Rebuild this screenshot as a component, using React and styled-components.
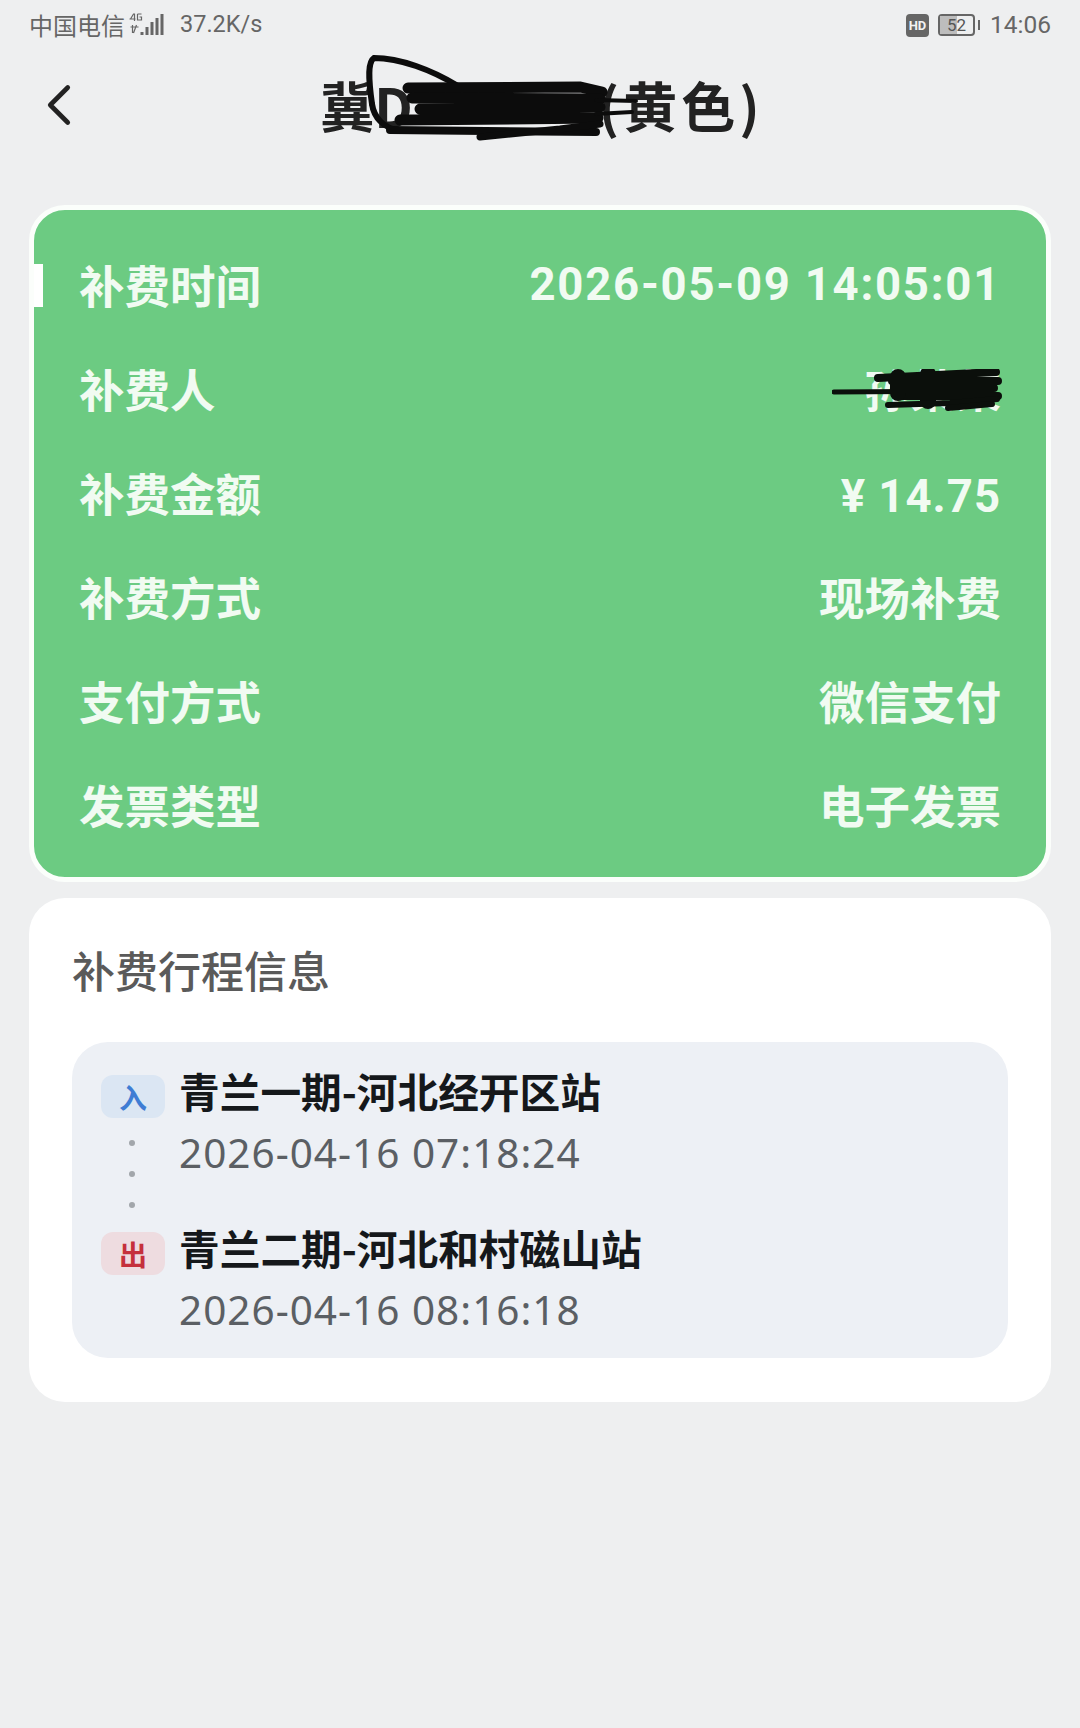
import React from 'react'
import styled, { createGlobalStyle } from 'styled-components';
import { ChevronLeft } from 'lucide-react';

const fontStack = `"Noto Sans CJK SC", "Noto Sans", sans-serif`;

const infoRows = [
  { label: '补费时间', value: '2026-05-09 14:05:01', active: true, digits: true, spacing: 1.75 },
  { label: '补费人', value: '孙某某', masked: true },
  { label: '补费金额', value: '¥ 14.75', digits: true, spacing: 1, drop: 8 },
  { label: '补费方式', value: '现场补费' },
  { label: '支付方式', value: '微信支付' },
  { label: '发票类型', value: '电子发票' },
];

const tripStops = [
  { type: 'in', tag: '入', name: '青兰一期-河北经开区站', time: '2026-04-16 07:18:24' },
  { type: 'out', tag: '出', name: '青兰二期-河北和村磁山站', time: '2026-04-16 08:16:18' },
];

const SignalIcon = () => (
  <svg width="37" height="24" viewBox="0 0 34 24" fill="#666">
    <rect x="21" y="9" width="3" height="13" />
    <rect x="26" y="5" width="3" height="17" />
    <rect x="31" y="1" width="3" height="21" />
    <rect x="16" y="14" width="3" height="8" />
    <rect x="11" y="19" width="3" height="3" />
    <path d="M1 6l3-5h1v7M0 6h6M8 1h4M8 1v6h4V4h-2M1 14h8M3 12v8M7 12l-3 8" stroke="#666" strokeWidth="1.2" fill="none" />
  </svg>
);

const TitleScribble = () => (
  <svg width="290" height="90" viewBox="0 0 290 90" fill="none" stroke="#0c0c0c" strokeLinecap="round">
    <path d="M12 52C8 24 8 10 14 6c26 0 58 12 84 28" strokeWidth="6" />
    <path d="M12 52c2 14 12 24 26 26" strokeWidth="6" />
    <path d="M48 36L220 35L242 40" strokeWidth="11" />
    <path d="M30 78L236 80" strokeWidth="8" />
    <path d="M52 46L240 47M60 57L240 55M40 68L238 66" strokeWidth="11" />
    <path d="M120 85L200 77L240 72" strokeWidth="7" />
    <path d="M236 48L276 49M236 62L272 60" strokeWidth="4" />
  </svg>
);

const NameScribble = () => (
  <svg width="175" height="50" viewBox="0 0 175 50" fill="none" stroke="#0b0f0b" strokeLinecap="round">
    <path d="M2 23L150 22" strokeWidth="5" />
    <path d="M46 9L164 3M60 12L166 12M62 20L162 19M70 27L166 27" strokeWidth="8" />
    <path d="M66 8L66 24M96 5L96 32" strokeWidth="16" />
    <path d="M56 36L118 34L165 30" strokeWidth="6" />
    <path d="M116 39L160 35" strokeWidth="6" />
  </svg>
);

const App = () => {
  return (
    <Page>
      <GlobalStyle />
      <StatusBar>
        <StatusGroup>
          <span>中国电信</span>
          <SignalIcon />
          <NetSpeed>37.2K/s</NetSpeed>
        </StatusGroup>
        <StatusGroup>
          <HdBadge>HD</HdBadge>
          <Battery>
            <BatteryFill />
            <BatteryText>52</BatteryText>
          </Battery>
          <BatteryCap />
          <ClockText>14:06</ClockText>
        </StatusGroup>
      </StatusBar>

      <NavBar>
        <BackButton>
          <ChevronLeft size={70} strokeWidth={1.6} color="#222" />
        </BackButton>
        <Title>
          冀D
          <TitleMask>
            <TitleScribble />
          </TitleMask>
          <TitleTail>(黄色)</TitleTail>
        </Title>
      </NavBar>

      <GreenCard>
        {infoRows.map(row => (
          <InfoRow key={row.label} $active={row.active}>
            <InfoLabel>{row.label}</InfoLabel>
            <InfoValue $digits={row.digits} $spacing={row.spacing} $drop={row.drop}>
              {row.value}
              {row.masked && <NameMask><NameScribble /></NameMask>}
            </InfoValue>
          </InfoRow>
        ))}
      </GreenCard>

      <TripCard>
        <TripTitle>补费行程信息</TripTitle>
        <TripBox>
          {tripStops.map((stop, index) => (
            <TripStop key={stop.type}>
              <TagColumn>
                <StopTag $type={stop.type}>{stop.tag}</StopTag>
                {index === 0 && (
                  <Dots>
                    <Dot />
                    <Dot />
                    <Dot />
                  </Dots>
                )}
              </TagColumn>
              <StopText>
                <StopName>{stop.name}</StopName>
                <StopTime>{stop.time}</StopTime>
              </StopText>
            </TripStop>
          ))}
        </TripBox>
      </TripCard>
    </Page>
  )
}

const GlobalStyle = createGlobalStyle`
  html, body {
    margin: 0;
    padding: 0;
    background: #eeeff0;
    font-family: ${fontStack};
  }

  * {
    box-sizing: border-box;
  }
`;

const Page = styled.div`
  width: 1080px;
  height: 1728px;
  padding: 0 29px;
  background: #eeeff0;
  overflow: hidden;
`;

const StatusBar = styled.div`
  display: flex;
  justify-content: space-between;
  align-items: center;
  height: 50px;
  color: #666;
  font-size: 24px;
  line-height: 1;
`;

const StatusGroup = styled.div`
  display: flex;
  align-items: center;
  gap: 3px;
`;

const NetSpeed = styled.span`
  margin-left: 12px;
  font-family: "Roboto", sans-serif;
  font-size: 23.5px;
`;

const HdBadge = styled.span`
  display: flex;
  align-items: center;
  justify-content: center;
  width: 23px;
  height: 23px;
  margin-right: 6px;
  border-radius: 4px;
  background: #666;
  color: #f2f2f2;
  font-family: "Roboto", sans-serif;
  font-size: 13px;
  font-weight: 700;
`;

const Battery = styled.span`
  position: relative;
  display: block;
  width: 37px;
  height: 22px;
  border: 2px solid #666;
  border-radius: 4px;
`;

const BatteryFill = styled.span`
  display: block;
  width: 52%;
  height: 100%;
  background: #bdbdbd;
`;

const BatteryText = styled.span`
  position: absolute;
  inset: 0;
  display: flex;
  align-items: center;
  justify-content: center;
  color: #555;
  font-family: "Roboto", sans-serif;
  font-size: 17px;
`;

const BatteryCap = styled.span`
  display: block;
  width: 2px;
  height: 10px;
  background: #666;
`;

const ClockText = styled.span`
  margin-left: 7px;
  font-family: "Roboto", sans-serif;
  font-size: 24.5px;
`;

const NavBar = styled.div`
  position: relative;
  display: flex;
  justify-content: center;
  align-items: center;
  height: 108px;
  margin-bottom: 47px;
`;

const BackButton = styled.div`
  position: absolute;
  left: -5px;
  top: 20px;
  display: flex;
`;

const Title = styled.h1`
  position: relative;
  display: flex;
  align-items: center;
  margin: 2px 0 0;
  color: #222;
  font-size: 54px;
  font-weight: 700;
  line-height: 1;
  white-space: nowrap;
`;

const TitleMask = styled.span`
  position: relative;
  z-index: 1;
  display: block;
  width: 186px;
  height: 50px;

  svg {
    position: absolute;
    left: -53px;
    top: -28px;
  }
`;

const TitleTail = styled.span`
  letter-spacing: 4px;
  margin-right: -4px;
`;

const GreenCard = styled.section`
  display: flex;
  flex-direction: column;
  width: 1022px;
  height: 677px;
  padding: 24px 0 0;
  border: 5px solid #fbfefb;
  border-radius: 36px;
  background: #6ccb82;
`;

const InfoRow = styled.div`
  position: relative;
  display: flex;
  flex: none;
  justify-content: space-between;
  align-items: center;
  height: 104px;
  padding: 0 45px 2px;
  color: #f1fbf2;

  &::before {
    content: ${({ $active }) => ($active ? '""' : 'none')};
    position: absolute;
    left: 0;
    top: 30px;
    width: 9px;
    height: 43px;
    background: #fff;
  }
`;

const InfoLabel = styled.span`
  font-size: 45.5px;
  font-weight: 700;
  line-height: 1;
`;

const InfoValue = styled.span`
  position: relative;
  padding-top: ${({ $drop }) => $drop || 0}px;
  font-family: ${({ $digits }) => ($digits ? `"Roboto", ${fontStack}` : fontStack)};
  font-size: 45.5px;
  font-weight: 700;
  line-height: 1;
  letter-spacing: ${({ $spacing }) => $spacing || 0}px;
`;

const NameMask = styled.span`
  position: absolute;
  right: -6px;
  top: 3px;
  display: block;
`;

const TripCard = styled.section`
  width: 1022px;
  height: 504px;
  margin-top: 16px;
  padding: 46px 43px 0;
  border-radius: 36px;
  background: #fff;
`;

const TripTitle = styled.h2`
  margin: 0 0 48px;
  color: #5a5a5a;
  font-size: 43px;
  font-weight: 500;
  line-height: 50px;
`;

const TripBox = styled.div`
  display: flex;
  flex-direction: column;
  gap: 47px;
  height: 316px;
  padding: 25px 28px 0 29px;
  border-radius: 36px;
  background: #edf0f5;
`;

const TripStop = styled.div`
  display: flex;
  gap: 14px;
`;

const TagColumn = styled.div`
  position: relative;
  width: 64px;
`;

const StopTag = styled.span`
  display: flex;
  align-items: center;
  justify-content: center;
  width: 64px;
  height: 43px;
  margin-top: 8px;
  border-radius: 12px;
  background: ${({ $type }) => ($type === 'in' ? '#dbe6f3' : '#eedce0')};
  color: ${({ $type }) => ($type === 'in' ? '#3f7dd4' : '#c5303c')};
  font-size: 28px;
  font-weight: 700;
  line-height: 1;
`;

const Dots = styled.div`
  position: absolute;
  left: 28px;
  top: 73px;
  display: flex;
  flex-direction: column;
  gap: 25px;
`;

const Dot = styled.span`
  display: block;
  width: 6px;
  height: 6px;
  border-radius: 50%;
  background: #a2a6ab;
`;

const StopText = styled.div`
  display: flex;
  flex-direction: column;
  gap: 14px;
`;

const StopName = styled.div`
  color: #15181b;
  font-size: 40.7px;
  font-weight: 700;
  line-height: 48px;
  white-space: nowrap;
`;

const StopTime = styled.div`
  color: #5b5f64;
  font-family: "Noto Sans", sans-serif;
  font-size: 40.5px;
  line-height: 48px;
  letter-spacing: 1px;
  white-space: nowrap;
`;

export default App
